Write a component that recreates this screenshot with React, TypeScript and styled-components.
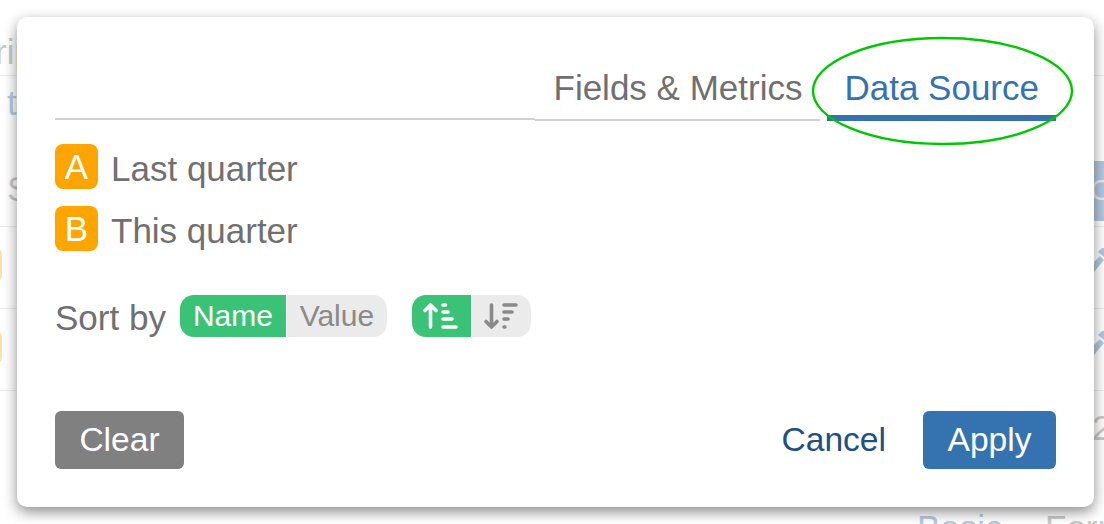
import styled, { createGlobalStyle } from "styled-components";

const Global = createGlobalStyle`
  html, body {
    margin: 0;
    padding: 0;
    background: #fff;
    overflow: hidden;
  }
  * {
    box-sizing: border-box;
  }
`;

const Page = styled.div`
  position: relative;
  width: 1104px;
  height: 524px;
  padding: 17px 10px 17px 17px;
  font-family: "Liberation Sans", Arial, sans-serif;
  font-size: 35px;
  color: #707070;
  overflow: hidden;
`;

/* the page behind the dialog, only its edges show */
const Behind = styled.div<{ $x: number; $y: number; $color?: string }>`
  position: absolute;
  left: ${(p) => p.$x}px;
  top: ${(p) => p.$y}px;
  color: ${(p) => p.$color || "#c9c9c9"};
  font-size: 35px;
  line-height: 36px;
  white-space: nowrap;
`;

const BehindLine = styled.div<{ $y: number }>`
  position: absolute;
  left: 0;
  right: 0;
  top: ${(p) => p.$y}px;
  height: 1px;
  background: #ececec;
`;

const BehindBadge = styled.div<{ $y: number }>`
  position: absolute;
  left: -40px;
  top: ${(p) => p.$y}px;
  width: 42px;
  height: 36px;
  border-radius: 8px;
  background: #ffe0a8;
`;

const BehindTag = styled.div`
  position: absolute;
  left: 1090px;
  top: 161px;
  width: 40px;
  height: 60px;
  background: #b3c7dd;
  color: #e6edf4;
  padding-left: 0;
  line-height: 58px;
  font-size: 30px;
`;

const BehindPencil = styled.svg<{ $y: number }>`
  position: absolute;
  left: 1094px;
  top: ${(p) => p.$y}px;
  width: 10px;
  height: 24px;
`;

const Dialog = styled.div`
  position: relative;
  display: flex;
  flex-direction: column;
  height: 490px;
  width: 1077px;
  padding: 0 38px 38px;
  background: #fff;
  border-radius: 10px;
  box-shadow: 0 5px 14px rgba(0, 0, 0, 0.45);
`;

const TabBar = styled.div`
  display: flex;
  align-items: flex-end;
  height: 104px;
`;

const TabFill = styled.div`
  flex: 1;
  border-bottom: 2px solid #d0d0d0;
  margin-bottom: 1px;
`;

const Tab = styled.div<{ $active?: boolean }>`
  height: 58px;
  line-height: 50px;
  padding: ${(p) => (p.$active ? "0 17px" : "0 18px 0 19px")};
  color: ${(p) => (p.$active ? "#3572b0" : "#707070")};
  border-bottom: ${(p) =>
    p.$active ? "6px solid #3572b0" : "2px solid #d0d0d0"};
  margin-left: ${(p) => (p.$active ? "7px" : "0")};
  white-space: nowrap;
`;

const SourceList = styled.div`
  display: flex;
  flex-direction: column;
  gap: 17px;
  margin-top: 23px;
`;

const SourceRow = styled.div`
  display: flex;
  align-items: center;
  gap: 13px;
  height: 45px;
`;

const SourceName = styled.span`
  padding-top: 4px;
`;

const Badge = styled.div`
  display: flex;
  align-items: center;
  justify-content: center;
  width: 43px;
  height: 45px;
  border-radius: 8px;
  background: #ffa500;
  color: #fff;
`;

const SortRow = styled.div`
  display: flex;
  align-items: center;
  margin-top: 44px;
  height: 42px;
`;

const SortLabel = styled.span`
  margin-right: 14px;
  padding-top: 4px;
`;

const Toggle = styled.div`
  display: flex;
  height: 42px;
  margin-right: 25px;
  border-radius: 14px;
  overflow: hidden;
`;

const ToggleItem = styled.div<{ $on?: boolean; $w: number }>`
  display: flex;
  align-items: center;
  justify-content: center;
  width: ${(p) => p.$w}px;
  background: ${(p) => (p.$on ? "#3ac276" : "#ebebeb")};
  color: ${(p) => (p.$on ? "#fff" : "#8a8a8a")};
  font-size: 30px;
  & + & {
    margin-left: 1px;
  }
`;

const Footer = styled.div`
  display: flex;
  align-items: center;
  margin-top: auto;
  font-size: 33.6px;
`;

const Clear = styled.button`
  width: 129px;
  height: 58px;
  border: 0;
  border-radius: 6px;
  background: #808080;
  color: #fff;
  font: inherit;
`;

const Cancel = styled.button`
  margin-left: auto;
  margin-right: 37px;
  padding: 0;
  border: 0;
  background: none;
  color: #205081;
  font: inherit;
`;

const Apply = styled.button`
  width: 133px;
  height: 58px;
  border: 0;
  border-radius: 6px;
  background: #3572b0;
  color: #fff;
  font: inherit;
`;

const Marker = styled.svg`
  position: absolute;
  left: 795px;
  top: 20px;
  width: 261px;
  height: 108px;
  overflow: visible;
  pointer-events: none;
`;

const SortUp = ({ color }: { color: string }) => (
  <svg width="48" height="30" viewBox="0 0 48 30" fill="none" stroke={color} strokeWidth="3.6" strokeLinecap="round">
    <path d="M13.5 26V4M8 9.5l5.500-5.500 5.500 5.500" strokeLinejoin="round" />
    <path d="M26 4h2.500M26 11h5M26 18h9M26 26h13" />
  </svg>
);

const SortDown = ({ color }: { color: string }) => (
  <svg width="48" height="30" viewBox="0 0 48 30" fill="none" stroke={color} strokeWidth="3.6" strokeLinecap="round">
    <path d="M14.500 4v22M9 20.500l5.500 5.500 5.500-5.500" strokeLinejoin="round" />
    <path d="M27 4h12M27 11h8M27 18h4M27 26h1" />
  </svg>
);

const Pencil = ({ y }: { y: number }) => (
  <BehindPencil $y={y} viewBox="0 0 10 24">
    <path d="M0 14l6-6 4 4v0L0 24z" fill="#b3c7dd" />
    <path d="M4 4l4-4h2v9z" fill="#b3c7dd" />
  </BehindPencil>
);

const App = () => {
  return (
    <Page>
      <Global />
      <BehindLine $y={75} />
      <BehindLine $y={226} />
      <BehindLine $y={308} />
      <BehindLine $y={390} />
      <Behind $x={-5} $y={34}>rip</Behind>
      <Behind $x={7} $y={85} $color="#b8cadf">t</Behind>
      <Behind $x={7} $y={171}>S</Behind>
      <BehindBadge $y={247} />
      <BehindBadge $y={329} />
      <BehindTag>C</BehindTag>
      <Pencil y={248} />
      <Pencil y={331} />
      <Behind $x={1092} $y={410}>2</Behind>
      <Behind $x={917} $y={510} $color="#b8cadf">Basic</Behind>
      <Behind $x={1045} $y={510}>Form</Behind>
      <Dialog>
        <TabBar>
          <TabFill />
          <Tab>Fields &amp; Metrics</Tab>
          <Tab $active>Data Source</Tab>
        </TabBar>
        <SourceList>
          <SourceRow>
            <Badge>A</Badge>
            <SourceName>Last quarter</SourceName>
          </SourceRow>
          <SourceRow>
            <Badge>B</Badge>
            <SourceName>This quarter</SourceName>
          </SourceRow>
        </SourceList>
        <SortRow>
          <SortLabel>Sort by</SortLabel>
          <Toggle>
            <ToggleItem $on $w={106}>Name</ToggleItem>
            <ToggleItem $w={100}>Value</ToggleItem>
          </Toggle>
          <Toggle>
            <ToggleItem $on $w={59}><SortUp color="#fff" /></ToggleItem>
            <ToggleItem $w={59}><SortDown color="#8a8a8a" /></ToggleItem>
          </Toggle>
        </SortRow>
        <Footer>
          <Clear>Clear</Clear>
          <Cancel>Cancel</Cancel>
          <Apply>Apply</Apply>
        </Footer>
        <Marker viewBox="0 0 261 108">
          <ellipse cx="130.5" cy="54" rx="129.5" ry="53" fill="none" stroke="#00c800" strokeWidth="2.4" />
        </Marker>
      </Dialog>
    </Page>
  );
};

export default App;
